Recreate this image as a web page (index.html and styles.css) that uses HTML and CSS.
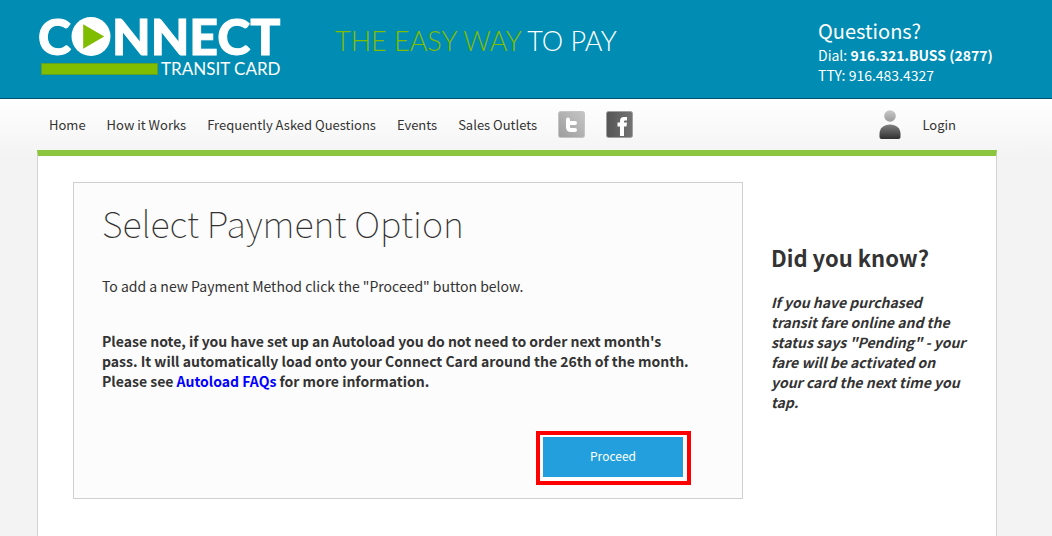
FILE: index.html
```html
<!DOCTYPE html>
<html lang="en">
<head>
  <meta charset="UTF-8" />
  <meta name="viewport" content="width=device-width, initial-scale=1.0"/>
  <title>Connect Transit Card</title>
  <link rel="stylesheet" href="styles.css">
</head>
<body>

  <header class="site-header">
    <div class="container header-inner">
      <a href="#" class="logo">
        <span class="logo-name">
          <span>C</span>
          <svg class="logo-o" viewBox="0 0 40 40" role="img" aria-label="O">
            <circle cx="20" cy="20" r="20" fill="#fff"/>
            <path d="M12 7.5v25L33.500 20z" fill="#80bc00"/>
          </svg>
          <span>NNECT</span>
        </span>
        <span class="logo-sub">
          <span class="logo-bar"></span>
          <span>TRANSIT CARD</span>
        </span>
      </a>
      <p class="tagline"><span class="green">THE EASY WAY</span> TO PAY</p>
      <div class="questions">
        <h2>Questions?</h2>
        <p>Dial: <strong>916.321.BUSS (2877)</strong></p>
        <p>TTY: 916.483.4327</p>
      </div>
    </div>
  </header>

  <div class="page">
    <nav class="container main-nav">
      <ul>
        <li><a href="#">Home</a></li>
        <li><a href="#">How it Works</a></li>
        <li><a href="#">Frequently Asked Questions</a></li>
        <li><a href="#">Events</a></li>
        <li><a href="#">Sales Outlets</a></li>
        <li>
          <a href="#" class="social" aria-label="Twitter">
            <svg viewBox="0 0 27 27">
              <defs>
                <linearGradient id="tw" x1="0" y1="1" x2="1" y2="0">
                  <stop offset="0" stop-color="#9c9c9c"/>
                  <stop offset="1" stop-color="#c6c6c6"/>
                </linearGradient>
              </defs>
              <rect x="0.500" y="0.500" width="26" height="26" rx="2" fill="url(#tw)" stroke="#c4c4c4"/>
              <path d="M10 8.500v7.500q0 3 3 3h4M10 12h7" fill="none" stroke="#fff" stroke-width="4" stroke-linecap="round" stroke-linejoin="round"/>
            </svg>
          </a>
        </li>
        <li>
          <a href="#" class="social" aria-label="Facebook">
            <svg viewBox="0 0 27 27">
              <defs>
                <linearGradient id="fb" x1="0" y1="0" x2="1" y2="0">
                  <stop offset="0" stop-color="#555"/>
                  <stop offset="1" stop-color="#737373"/>
                </linearGradient>
              </defs>
              <rect x="0.500" y="0.500" width="26" height="26" rx="2" fill="url(#fb)" stroke="#a0a0a0"/>
              <path d="M14 25V15.500h-2.500v-4H14V10q0-4 4-4h3v3.500h-2q-1 0-1 1v1h3l-.5 4H18V25z" fill="#fff"/>
            </svg>
          </a>
        </li>
      </ul>
      <a href="#" class="login">
        <svg class="user-icon" viewBox="0 0 22 30">
          <defs>
            <linearGradient id="head" x1="0" y1="0" x2="0" y2="1">
              <stop offset="0" stop-color="#c9c9c9"/>
              <stop offset="1" stop-color="#9b9b9b"/>
            </linearGradient>
            <linearGradient id="torso" x1="0" y1="0" x2="0" y2="1">
              <stop offset="0" stop-color="#808080"/>
              <stop offset="1" stop-color="#303030"/>
            </linearGradient>
          </defs>
          <circle cx="11" cy="6" r="5.800" fill="url(#head)"/>
          <path d="M0.500 24C0.500 18 5 14.500 11 14.500S21.500 18 21.500 24v3q0 2-2 2h-17q-2 0-2-2z" fill="url(#torso)"/>
        </svg>
        <span>Login</span>
      </a>
    </nav>

    <main class="container content">
      <section class="payment">
        <h1>Select Payment Option</h1>
        <p>To add a new Payment Method click the "Proceed" button below.</p>
        <p class="note">Please note, if you have set up an Autoload you do not need to order next month's pass. It will automatically load onto your Connect Card around the 26th of the month. Please see <a href="#">Autoload FAQs</a> for more information.</p>
        <div class="actions">
          <div class="highlight">
            <button type="button">Proceed</button>
          </div>
        </div>
      </section>

      <aside class="sidebar">
        <h2>Did you know?</h2>
        <p>If you have purchased transit fare online and the status says "Pending" - your fare will be activated on your card the next time you tap.</p>
      </aside>
    </main>
  </div>

</body>
</html>
```
FILE: styles.css
```css
* {
  box-sizing: border-box;
}

body {
  display: flex;
  flex-direction: column;
  min-height: 100vh;
  font-family: "Noto Sans CJK SC", "Noto Sans", sans-serif;
  font-size: 14px;
  line-height: 20px;
  margin: 0;
  color: #333;
  background-color: #f3f3f3;
}

h1, h2, p, ul {
  margin: 0;
  padding: 0;
}

a {
  color: #333;
  text-decoration: none;
}

svg {
  display: block;
}

.container {
  width: 100%;
  max-width: 960px;
  margin: 0 auto;
}

.site-header,
.page {
  padding: 0 55px 0 37px;
}

.site-header {
  background-color: #008cb3;
  border-bottom: 1px solid #00526b;
  color: white;
}

.header-inner {
  display: flex;
  align-items: flex-start;
  height: 98px;
}

.logo {
  display: flex;
  flex-direction: column;
  gap: 7px;
  width: 246px;
  padding: 17px 0 0 1px;
  color: white;
  font-family: Lato, sans-serif;
}

.logo-name {
  display: flex;
  align-items: center;
  height: 39px;
  font-size: 50px;
  line-height: 39px;
  font-weight: 900;
  -webkit-text-stroke: 1px white;
}

.logo-o {
  width: 40px;
  height: 39px;
  margin-right: 1px;
}

.logo-sub {
  display: flex;
  align-items: center;
  gap: 3px;
  padding-left: 3px;
  font-size: 17px;
  line-height: 12px;
  white-space: nowrap;
}

.logo-bar {
  flex: none;
  width: 117px;
  height: 12px;
  background-color: #80bc00;
  border: 1px solid #5f9f2a;
}

.tagline {
  padding: 24px 0 0 52px;
  font-family: Lato, sans-serif;
  font-size: 27px;
  font-weight: 300;
  line-height: 34px;
  white-space: nowrap;
  -webkit-text-stroke: 1px transparent;
}

.green {
  color: #80bc00;
}

.questions {
  width: 179px;
  margin-left: auto;
  padding-top: 17px;
  white-space: nowrap;
}

.questions h2 {
  font-size: 20px;
  font-weight: 400;
  line-height: 28px;
}

.page {
  display: flex;
  flex-direction: column;
  flex: 1;
  background: linear-gradient(#fff, #f3f3f3 60px);
}

.main-nav {
  display: flex;
  justify-content: space-between;
  height: 51px;
  padding: 0 41px 0 12px;
  font-size: 13px;
}

.main-nav ul {
  display: flex;
  align-items: center;
  gap: 21px;
  list-style: none;
  white-space: nowrap;
}

.social svg {
  width: 27px;
  height: 27px;
}

.login {
  display: flex;
  align-items: center;
  gap: 21px;
}

.user-icon {
  width: 22px;
  height: 30px;
}

.content {
  display: flex;
  align-items: flex-start;
  flex: 1;
  gap: 28px;
  padding: 26px 26px 37px 35px;
  background-color: white;
  border: 1px solid #d3d3d3;
  border-top: 6px solid #8cc63f;
  border-bottom: none;
}

.payment {
  flex: 1;
  padding: 17px 46px 13px 28px;
  background-color: #fcfcfc;
  border: 1px solid #d0d0d0;
}

.payment h1 {
  font-size: 36px;
  font-weight: 100;
  line-height: 44px;
  margin-bottom: 32px;
}

.note {
  margin-top: 35px;
  font-weight: 700;
}

.note a {
  color: #0000ff;
}

.actions {
  display: flex;
  justify-content: flex-end;
  margin: 40px 5px 0 0;
}

.highlight {
  padding: 2px 4px 4px 3px;
  background-color: white;
  border: 4px solid #ff0000;
}

button {
  display: block;
  width: 140px;
  height: 40px;
  padding: 0 0 3px;
  font-family: inherit;
  font-size: 12px;
  color: white;
  background-color: #229fdc;
  border: none;
  cursor: pointer;
}

.sidebar {
  width: 199px;
  padding-top: 60px;
}

.sidebar h2 {
  font-size: 22px;
  line-height: 30px;
}

.sidebar p {
  margin-top: 20px;
  font-weight: 700;
  font-style: italic;
}
```
